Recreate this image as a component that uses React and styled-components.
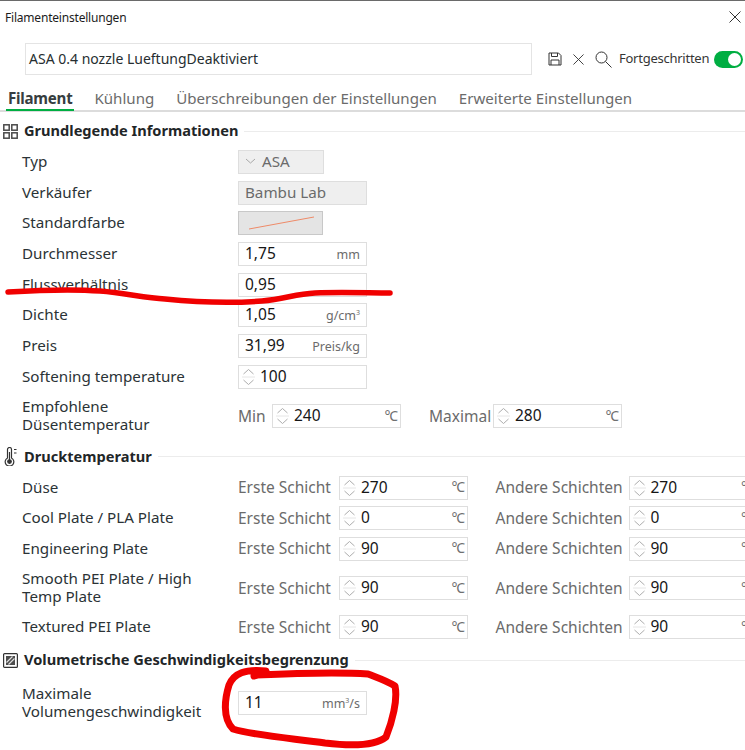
import React from "react";
import styled, { createGlobalStyle } from "styled-components";

const Global = createGlobalStyle`
  html, body { margin: 0; padding: 0; background: #fff; }
  body { font-family: "Noto Sans", "Open Sans", sans-serif; color: #262e30; overflow: hidden; }
  * { box-sizing: border-box; }
`;

const Page = styled.div`
  position: relative;
  width: 745px;
  height: 750px;
  overflow: hidden;
  background: #fff;
  border-top: 1px solid #6a6a6a;
`;
const TitleBar = styled.div`
  display: flex;
  justify-content: space-between;
  align-items: center;
  height: 32px;
  padding: 0 4px 0 5px;
  font-size: 12px;
  letter-spacing: -0.2px;
  color: #1c1c1c;
`;
const NameRow = styled.div`
  display: flex;
  align-items: center;
  height: 32px;
  margin-top: 10px;
  padding-left: 25px;
`;
const NameBox = styled.div`
  width: 507px;
  height: 32px;
  border: 1px solid #e4e4e4;
  padding: 0 0 2px 3px;
  display: flex;
  align-items: center;
  font-size: 14px;
  color: #262e30;
`;
const Tools = styled.div`
  display: flex;
  align-items: center;
  margin-left: 16px;
  gap: 11px;
`;
const Advanced = styled.span`
  font-size: 13px;
  letter-spacing: -0.25px;
  color: #363636;
  margin-left: -4px;
  padding-bottom: 2px;
`;
const Toggle = styled.div`
  width: 29px;
  height: 17px;
  margin-left: -6px;
  border-radius: 9px;
  background: #00ae42;
  padding: 2px;
  display: flex;
  justify-content: flex-end;
  &::after {
    content: "";
    width: 13px;
    height: 13px;
    border-radius: 50%;
    background: #fff;
  }
`;
const Tabs = styled.div`
  display: flex;
  align-items: flex-end;
  height: 37px;
  padding-left: 6px;
  gap: 18px;
  border-bottom: 2px solid #dcdcdc;
`;
const Tab = styled.div`
  height: 24px;
  padding: 0 2px;
  margin-bottom: -1px;
  font-size: 15.1px;
  line-height: 23px;
  letter-spacing: ${(p) => (p.$active ? "-0.25px" : "0")};
  font-weight: ${(p) => (p.$active ? 700 : 400)};
  color: ${(p) => (p.$active ? "#363d40" : "#6b6b6b")};
  border-bottom: 2px solid ${(p) => (p.$active ? "#00ae42" : "transparent")};
`;
const SectionHead = styled.div`
  display: flex;
  align-items: center;
  height: 20px;
  margin-top: ${(p) => p.$top || 0}px;
  padding-left: 3px;
  gap: 6px;
  white-space: nowrap;
  &::after {
    content: "";
    flex: 1;
    height: 1px;
    background: #ececec;
  }
`;
const HeadText = styled.span`
  font-size: 14.6px;
  font-weight: 700;
  color: #1f2628;
  padding-bottom: 2px;
`;
const Rows = styled.div`
  display: grid;
  row-gap: 6.7px;
  margin-top: ${(p) => p.$top || 9}px;
`;
const Row = styled.div`
  display: flex;
  align-items: center;
  min-height: 24px;
  padding-left: 22px;
`;
const Label = styled.div`
  width: 216px;
  flex: none;
  font-size: 15.2px;
  line-height: 18px;
  color: #2b3336;
  padding: 1.5px 20px 3.5px 0;
`;
const Box = styled.div`
  display: flex;
  align-items: center;
  flex: none;
  width: ${(p) => p.$w || 129}px;
  height: 24px;
  border: 1px solid #dedede;
  background: ${(p) => (p.$off ? "#efefef" : "#fff")};
  color: ${(p) => (p.$off ? "#6b6b6b" : "#161616")};
  font-size: ${(p) => (p.$off ? 15.2 : 15.5)}px;
  padding: 0 0 2px 6px;
`;
const StepBox = styled(Box)`
  padding-left: 1px;
`;
const Value = styled.span`
  flex: 1;
  margin-left: ${(p) => p.$left || 0}px;
  white-space: nowrap;
`;
const Unit = styled.span`
  font-size: 12.5px;
  color: #6b6b6b;
  margin-top: 3px;
  padding-right: 6px;
  white-space: nowrap;
  sup { font-size: 7px; line-height: 0; }
`;
const Degree = styled.span`
  font-size: 14px;
  letter-spacing: -1.2px;
  color: #6f6f6f;
  padding-right: 3px;
  white-space: nowrap;
`;
const Caption = styled.span`
  flex: none;
  font-size: 15.5px;
  color: #6b6b6b;
  margin-left: ${(p) => p.$left || 0}px;
  width: ${(p) => p.$w}px;
  white-space: nowrap;
  padding-bottom: 1px;
`;
const ColorBox = styled.div`
  width: 85px;
  height: 24px;
  border: 1px solid #c8c8c8;
  background: #e4e4e4;
  display: flex;
`;
const Chevron = styled.svg`
  margin-right: 6px;
`;
const Spinner = styled.svg`
  flex: none;
  margin-bottom: -2px;
`;
const Overlay = styled.svg`
  position: absolute;
  left: 0;
  top: -1px;
  pointer-events: none;
`;

const Spin = () => (
  <Spinner width="18" height="22" viewBox="0 0 18 22" fill="none">
    <path d="M3.5 8 8.5 3.5 13.500 8" stroke="#adadad" strokeWidth="1" />
    <path d="M3.500 14 8.500 18.500 13.500 14" stroke="#adadad" strokeWidth="1" />
    <path d="M2 11h13" stroke="#e6e6e6" strokeWidth="1" />
  </Spinner>
);
const Stepper = ({ v, w }) => (
  <StepBox $w={w}>
    <Spin />
    <Value $left={2}>{v}</Value>
    <Degree>°C</Degree>
  </StepBox>
);
const CloseIcon = ({ s = 12, c = "#333" }) => (
  <svg width={s} height={s} viewBox="0 0 12 12" fill="none">
    <path d="M.5.5l11 11M11.500.5l-11 11" stroke={c} strokeWidth="1" />
  </svg>
);
const SaveIcon = () => (
  <svg width="14" height="14" viewBox="0 0 14 14" fill="none" stroke="#333" strokeWidth="1">
    <path d="M1 1h9.500L13 3.500V13H1z" />
    <path d="M3.500 1v3.500h6V1M3 13V8h8v5" />
  </svg>
);
const SearchIcon = () => (
  <svg width="17" height="17" viewBox="0 0 17 17" fill="none" stroke="#333" strokeWidth="1">
    <circle cx="6.500" cy="6.500" r="5.500" />
    <path d="M10.500 10.500l6 6" />
  </svg>
);
const GridIcon = () => (
  <svg width="15" height="15" viewBox="0 0 15 15" fill="none" stroke="#4a4a4a" strokeWidth="1.500">
    <rect x=".8" y=".8" width="5.400" height="5.400" />
    <rect x="8.800" y=".8" width="5.400" height="5.400" />
    <rect x=".8" y="8.800" width="5.400" height="5.400" />
    <rect x="8.800" y="8.800" width="5.400" height="5.400" />
  </svg>
);
const ThermoIcon = () => (
  <svg width="15" height="19" viewBox="0 0 15 19" fill="none" stroke="#333" strokeWidth="1.200">
    <path d="M4.500 2.500a2 2 0 0 1 4 0v8.500a4.300 4.300 0 1 1-4 0z" />
    <circle cx="6.500" cy="14.600" r="1.800" fill="#333" />
    <path d="M6.500 5v8" />
    <path d="M11 2.500h2.500M11 6h2.500" />
  </svg>
);
const VolumeIcon = () => (
  <svg width="15" height="15" viewBox="0 0 15 15" fill="none">
    <rect x=".6" y=".6" width="13.800" height="13.800" rx="1" stroke="#333" strokeWidth="1.200" />
    <rect x="3" y="3" width="9" height="9" fill="#4d4d4d" />
    <path d="M3.500 9.500l6-6M5.500 11.500l6-6" stroke="#ddd" strokeWidth="1.200" />
  </svg>
);

const plates = [
  ["Düse", "270", "270"],
  ["Cool Plate / PLA Plate", "0", "0"],
  ["Engineering Plate", "90", "90"],
  ["Smooth PEI Plate / High Temp Plate", "90", "90"],
  ["Textured PEI Plate", "90", "90"],
];

export default function App() {
  return (
    <>
      <Global />
      <Page>
        <TitleBar>
          <span>Filamenteinstellungen</span>
          <CloseIcon />
        </TitleBar>
        <NameRow>
          <NameBox>ASA 0.4 nozzle LueftungDeaktiviert</NameBox>
          <Tools>
            <SaveIcon />
            <CloseIcon s={11} />
            <SearchIcon />
            <Advanced>Fortgeschritten</Advanced>
            <Toggle />
          </Tools>
        </NameRow>
        <Tabs>
          <Tab $active>Filament</Tab>
          <Tab>Kühlung</Tab>
          <Tab>Überschreibungen der Einstellungen</Tab>
          <Tab>Erweiterte Einstellungen</Tab>
        </Tabs>

        <SectionHead $top={9}>
          <GridIcon />
          <HeadText>Grundlegende Informationen</HeadText>
        </SectionHead>
        <Rows>
          <Row>
            <Label>Typ</Label>
            <Box $w={86} $off>
              <Chevron width="11" height="8" viewBox="0 0 11 8" fill="none">
                <path d="M1 2l4.500 4L10 2" stroke="#a8a8a8" />
              </Chevron>
              ASA
            </Box>
          </Row>
          <Row>
            <Label>Verkäufer</Label>
            <Box $off>Bambu Lab</Box>
          </Row>
          <Row>
            <Label>Standardfarbe</Label>
            <ColorBox>
              <svg width="83" height="22" viewBox="0 0 83 22" fill="none">
                <path d="M10 17L75 5" stroke="#ee8a68" strokeWidth="1" />
              </svg>
            </ColorBox>
          </Row>
          <Row>
            <Label>Durchmesser</Label>
            <Box><Value>1,75</Value><Unit>mm</Unit></Box>
          </Row>
          <Row>
            <Label>Flussverhältnis</Label>
            <Box><Value>0,95</Value></Box>
          </Row>
          <Row>
            <Label>Dichte</Label>
            <Box><Value>1,05</Value><Unit>g/cm<sup>3</sup></Unit></Box>
          </Row>
          <Row>
            <Label>Preis</Label>
            <Box><Value>31,99</Value><Unit>Preis/kg</Unit></Box>
          </Row>
          <Row>
            <Label>Softening temperature</Label>
            <StepBox>
              <Spin />
              <Value $left={2}>100</Value>
            </StepBox>
          </Row>
          <Row>
            <Label>Empfohlene Düsentemperatur</Label>
            <Caption $w={34}>Min</Caption>
            <Stepper v="240" />
            <Caption $left={28} $w={64}>Maximal</Caption>
            <Stepper v="280" />
          </Row>
        </Rows>

        <SectionHead $top={10}>
          <ThermoIcon />
          <HeadText>Drucktemperatur</HeadText>
        </SectionHead>
        <Rows>
          {plates.map(([name, a, b]) => (
            <Row key={name}>
              <Label>{name}</Label>
              <Caption $w={101}>Erste Schicht</Caption>
              <Stepper v={a} />
              <Caption $left={27.500} $w={133}>Andere Schichten</Caption>
              <Stepper v={b} />
            </Row>
          ))}
        </Rows>

        <SectionHead $top={11}>
          <VolumeIcon />
          <HeadText>Volumetrische Geschwindigkeitsbegrenzung</HeadText>
        </SectionHead>
        <Rows $top={12}>
          <Row>
            <Label>Maximale Volumengeschwindigkeit</Label>
            <Box><Value>11</Value><Unit>mm<sup>3</sup>/s</Unit></Box>
          </Row>
        </Rows>

        <Overlay width="745" height="750" viewBox="0 0 745 750" fill="none">
          <path
            d="M8 292C40 290 75 289 100 291C125 293 145 298 165 299C195 302 235 303 262 301C285 299 295 294 315 293C340 292 370 293 390 293"
            stroke="#f00000"
            strokeWidth="5.500"
            strokeLinecap="round"
          />
          <path
            d="M254 676C262 675 262 672 266 671C245 669 234 673 229 685C225 698 222 718 233 729C255 736 300 739 325 743C350 746 375 746 386 737C392 722 398 700 395 686C385 680 378 678 368 674C340 672 300 673 256 675"
            stroke="#f00000"
            strokeWidth="7"
            strokeLinecap="round"
            strokeLinejoin="round"
          />
        </Overlay>
      </Page>
    </>
  );
}
